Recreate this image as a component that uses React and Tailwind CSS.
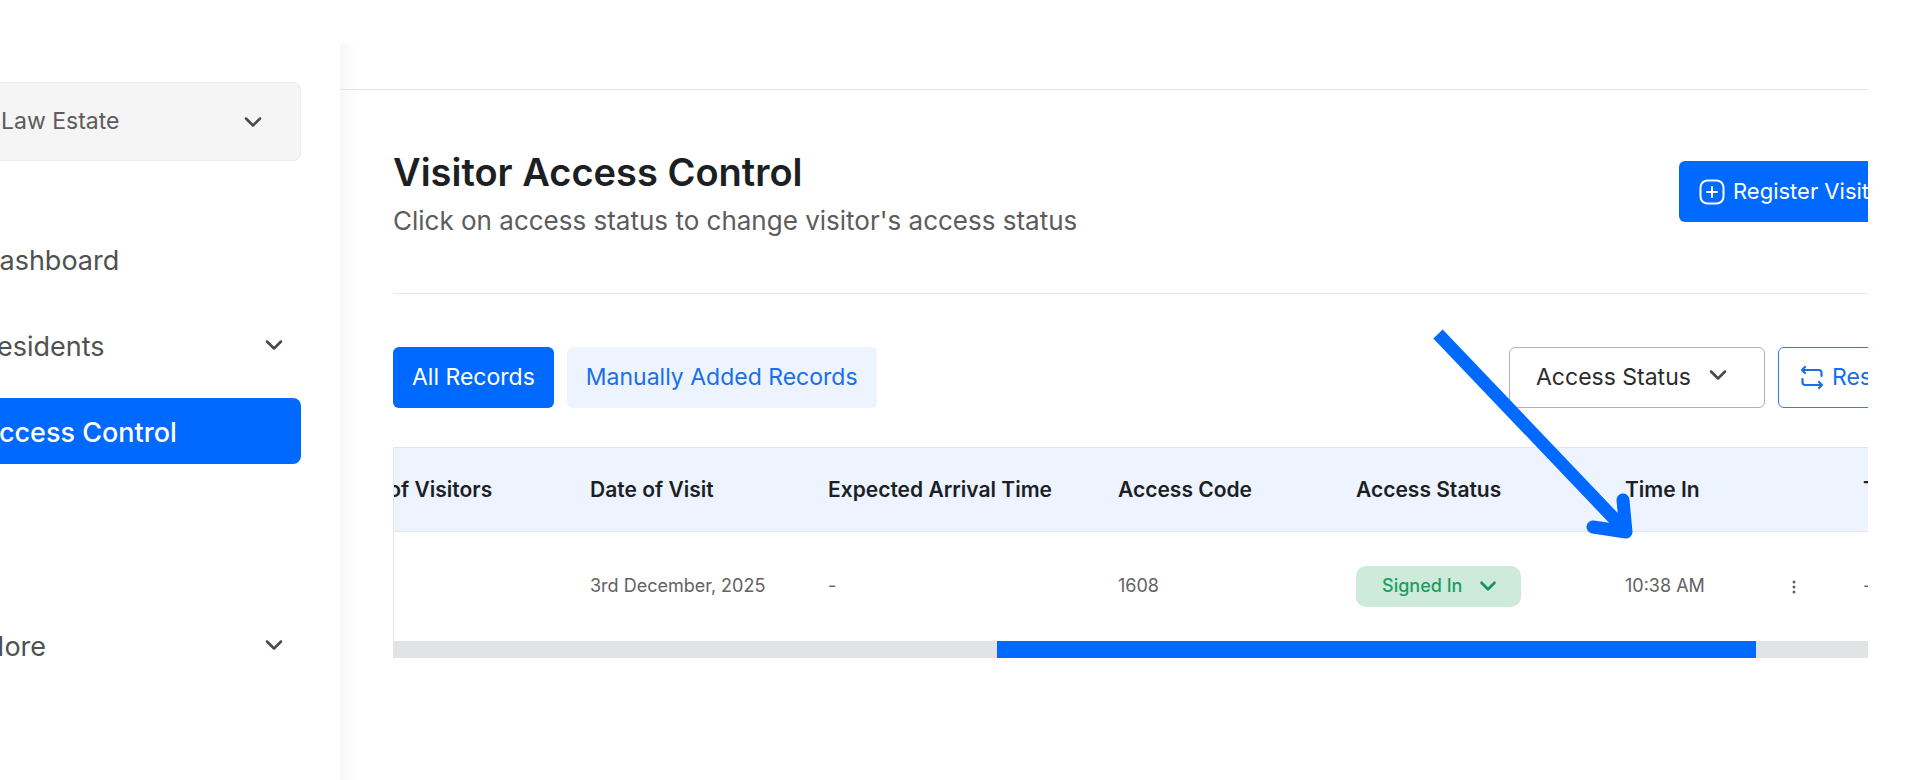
import { ChevronDown } from "lucide-react";

const navItems = [
  { label: "Dashboard" },
  { label: "Residents", expandable: true },
  { label: "Access Control", active: true },
];

const columns = [
  { title: "No. of Visitors", width: "w-[238px] pl-5" },
  { title: "Date of Visit", width: "w-[238px] pl-6" },
  { title: "Expected Arrival Time", width: "w-[290px] pl-6" },
  { title: "Access Code", width: "w-[238px] pl-6" },
  { title: "Access Status", width: "w-[269px] pl-6" },
  { title: "Time In", width: "w-[238px] pl-6" },
  { title: "Time Out", width: "w-[238px] pl-6" },
];

function Chevron({ className }) {
  return <ChevronDown size={28} strokeWidth={2.2} className={`pointer-events-none text-[#4a4a4a] ${className || ""}`} aria-hidden="true" />;
}

function PlusSquare() {
  return (
    <svg width="26" height="26" viewBox="0 0 26 26" fill="none" stroke="currentColor" strokeWidth="2" strokeLinecap="round" aria-hidden="true">
      <rect x="1.500" y="1.500" width="23" height="23" rx="7" />
      <path d="M13 8v10M8 13h10" />
    </svg>
  );
}

function ResetIcon() {
  return (
    <svg width="24" height="26" viewBox="0 0 24 26" fill="none" stroke="currentColor" strokeWidth="2.200" strokeLinecap="round" strokeLinejoin="round" aria-hidden="true">
      <path d="M5 2 2 5l3 3M2.500 5H19a2.500 2.500 0 0 1 2.500 2.500V11" />
      <path d="M19 17l3 3-3 3M21.500 20H5a2.500 2.500 0 0 1-2.500-2.500V14" />
    </svg>
  );
}

function Sidebar() {
  return (
    <aside className="w-[340px] shrink-0 overflow-hidden pr-[39px] pt-[82px]">
      <div className="grid items-center">
        <select aria-label="Estate" className="col-start-1 row-start-1 h-[79px] w-full appearance-none rounded-r-lg border border-l-0 border-[#ececec] bg-[#f5f5f5] pl-px text-[23px] text-[#5c5c5c]">
          <option>Law Estate</option>
        </select>
        <Chevron className="col-start-1 row-start-1 mr-[34px] justify-self-end" />
      </div>
      <nav className="mt-[65px] -ml-[20px] flex flex-col gap-5 text-[27px] text-[#505050]">
        {navItems.map((item) => (
          <a
            key={item.label}
            href="#"
            className={item.active ? "flex h-[66px] items-center rounded-lg bg-[#0069ff] pt-1 font-medium text-white" : "flex h-[66px] items-center justify-between pr-[13px] pt-1"}
          >
            {item.label}
            {item.expandable && <Chevron className="mb-1" />}
          </a>
        ))}
        <a href="#" className="mt-[128px] flex h-[66px] items-center justify-between pr-[13px] pt-1">
          More
          <Chevron className="mb-1" />
        </a>
      </nav>
    </aside>
  );
}

function RecordsTable() {
  return (
    <div className="mt-[39px] overflow-hidden border-l border-t border-[#e3e5e8]">
      <table className="-ml-[66px] w-[1749px] table-fixed border-collapse text-left">
        <thead>
          <tr className="h-[83px] border-b border-[#e3e5e8] bg-[#edf4ff] text-[21px] text-[#1c1f23]">
            {columns.map((col) => (
              <th key={col.title} scope="col" className={`${col.width} whitespace-nowrap font-semibold`}>{col.title}</th>
            ))}
          </tr>
        </thead>
        <tbody>
          <tr className="h-[110px] text-lg text-[#626262]">
            <td className="pl-5"></td>
            <td className="pl-6">3rd December, 2025</td>
            <td className="pl-6">-</td>
            <td className="pl-6">1608</td>
            <td className="pl-6">
              <div className="grid w-[165px] items-center">
                <select aria-label="Visitor access status" className="col-start-1 row-start-1 h-[41px] w-full appearance-none rounded-[10px] bg-[#cdeadb] pl-[26px] text-lg font-medium text-[#1a9e62]">
                  <option>Signed In</option>
                </select>
                <ChevronDown size={26} strokeWidth={2.4} className="pointer-events-none col-start-1 row-start-1 mr-[20px] justify-self-end text-[#15935a]" aria-hidden="true" />
              </div>
            </td>
            <td className="pl-6">
              <div className="flex items-center justify-between pr-[41px]">
                10:38 AM
                <button type="button" aria-label="Row actions">
                  <svg width="8" height="16" viewBox="0 0 8 16" fill="currentColor" aria-hidden="true">
                    <circle cx="4" cy="4" r="1.500" />
                    <circle cx="4" cy="9" r="1.500" />
                    <circle cx="4" cy="14" r="1.500" />
                  </svg>
                </button>
              </div>
            </td>
            <td className="pl-6">-</td>
          </tr>
        </tbody>
      </table>
      <div className="h-[17px] bg-[#e2e3e5]">
        <div className="ml-[39.3%] h-full w-[49.5%] bg-[#0069ff]" />
      </div>
    </div>
  );
}

export default function App() {
  return (
    <div className="flex min-h-screen overflow-hidden bg-white pr-[49px] font-['Inter',sans-serif]">
      <Sidebar />
      <main className="relative mt-[44px] min-w-0 flex-1 overflow-hidden bg-linear-to-r from-[#f7f7f7] to-white to-[18px]">
        <div className="h-[46px] border-b border-[#e4e4e4]" />
        <div className="-mr-[60px] pl-[53px]">
          <div className="flex items-start justify-between border-b border-[#e9e9e9] pb-[48px] pt-[57px]">
            <div>
              <h1 className="text-[38px] font-semibold leading-[50px] text-[#1c1f23]">Visitor Access Control</h1>
              <p className="text-[26px] leading-[48px] text-[#5c5c5c]">Click on access status to change visitor's access status</p>
            </div>
            <button type="button" className="mt-[14px] flex h-[61px] w-[249px] items-center gap-2 whitespace-nowrap rounded-md bg-[#0069ff] pl-5 text-[22px] text-white">
              <PlusSquare />
              Register Visitor
            </button>
          </div>

          <div className="mt-[53px] flex gap-[13px] text-[23px]">
            <button type="button" className="h-[61px] whitespace-nowrap rounded-md bg-[#0069ff] px-[19px] text-white">All Records</button>
            <button type="button" className="h-[61px] whitespace-nowrap rounded-md bg-[#edf4ff] px-[19px] text-[#1a6ee8]">Manually Added Records</button>
            <div className="ml-auto grid w-[256px] items-center">
              <select aria-label="Filter by access status" className="col-start-1 row-start-1 h-[61px] w-full appearance-none rounded-md border border-[#b0b0b0] pl-[26px] text-[#2c2c2c]">
                <option>Access Status</option>
              </select>
              <Chevron className="col-start-1 row-start-1 mr-[33px] mb-[6px] justify-self-end" />
            </div>
            <button type="button" className="flex h-[61px] w-[150px] items-center gap-2 rounded-md border border-[#2f7fe8] pl-[21px] text-[#1a6ee8]">
              <ResetIcon />
              Reset
            </button>
          </div>

          <RecordsTable />
        </div>

        {/* pointer to the Time In column */}
        <svg className="pointer-events-none absolute right-[230px] top-[281px]" width="210" height="220" viewBox="0 0 210 220" fill="none" stroke="#0069ff" strokeWidth="13" aria-hidden="true">
          <path d="M10 9 196 204" />
          <path d="M165 202 198 207 195 175" strokeLinecap="round" strokeLinejoin="round" />
        </svg>
      </main>
    </div>
  );
}
